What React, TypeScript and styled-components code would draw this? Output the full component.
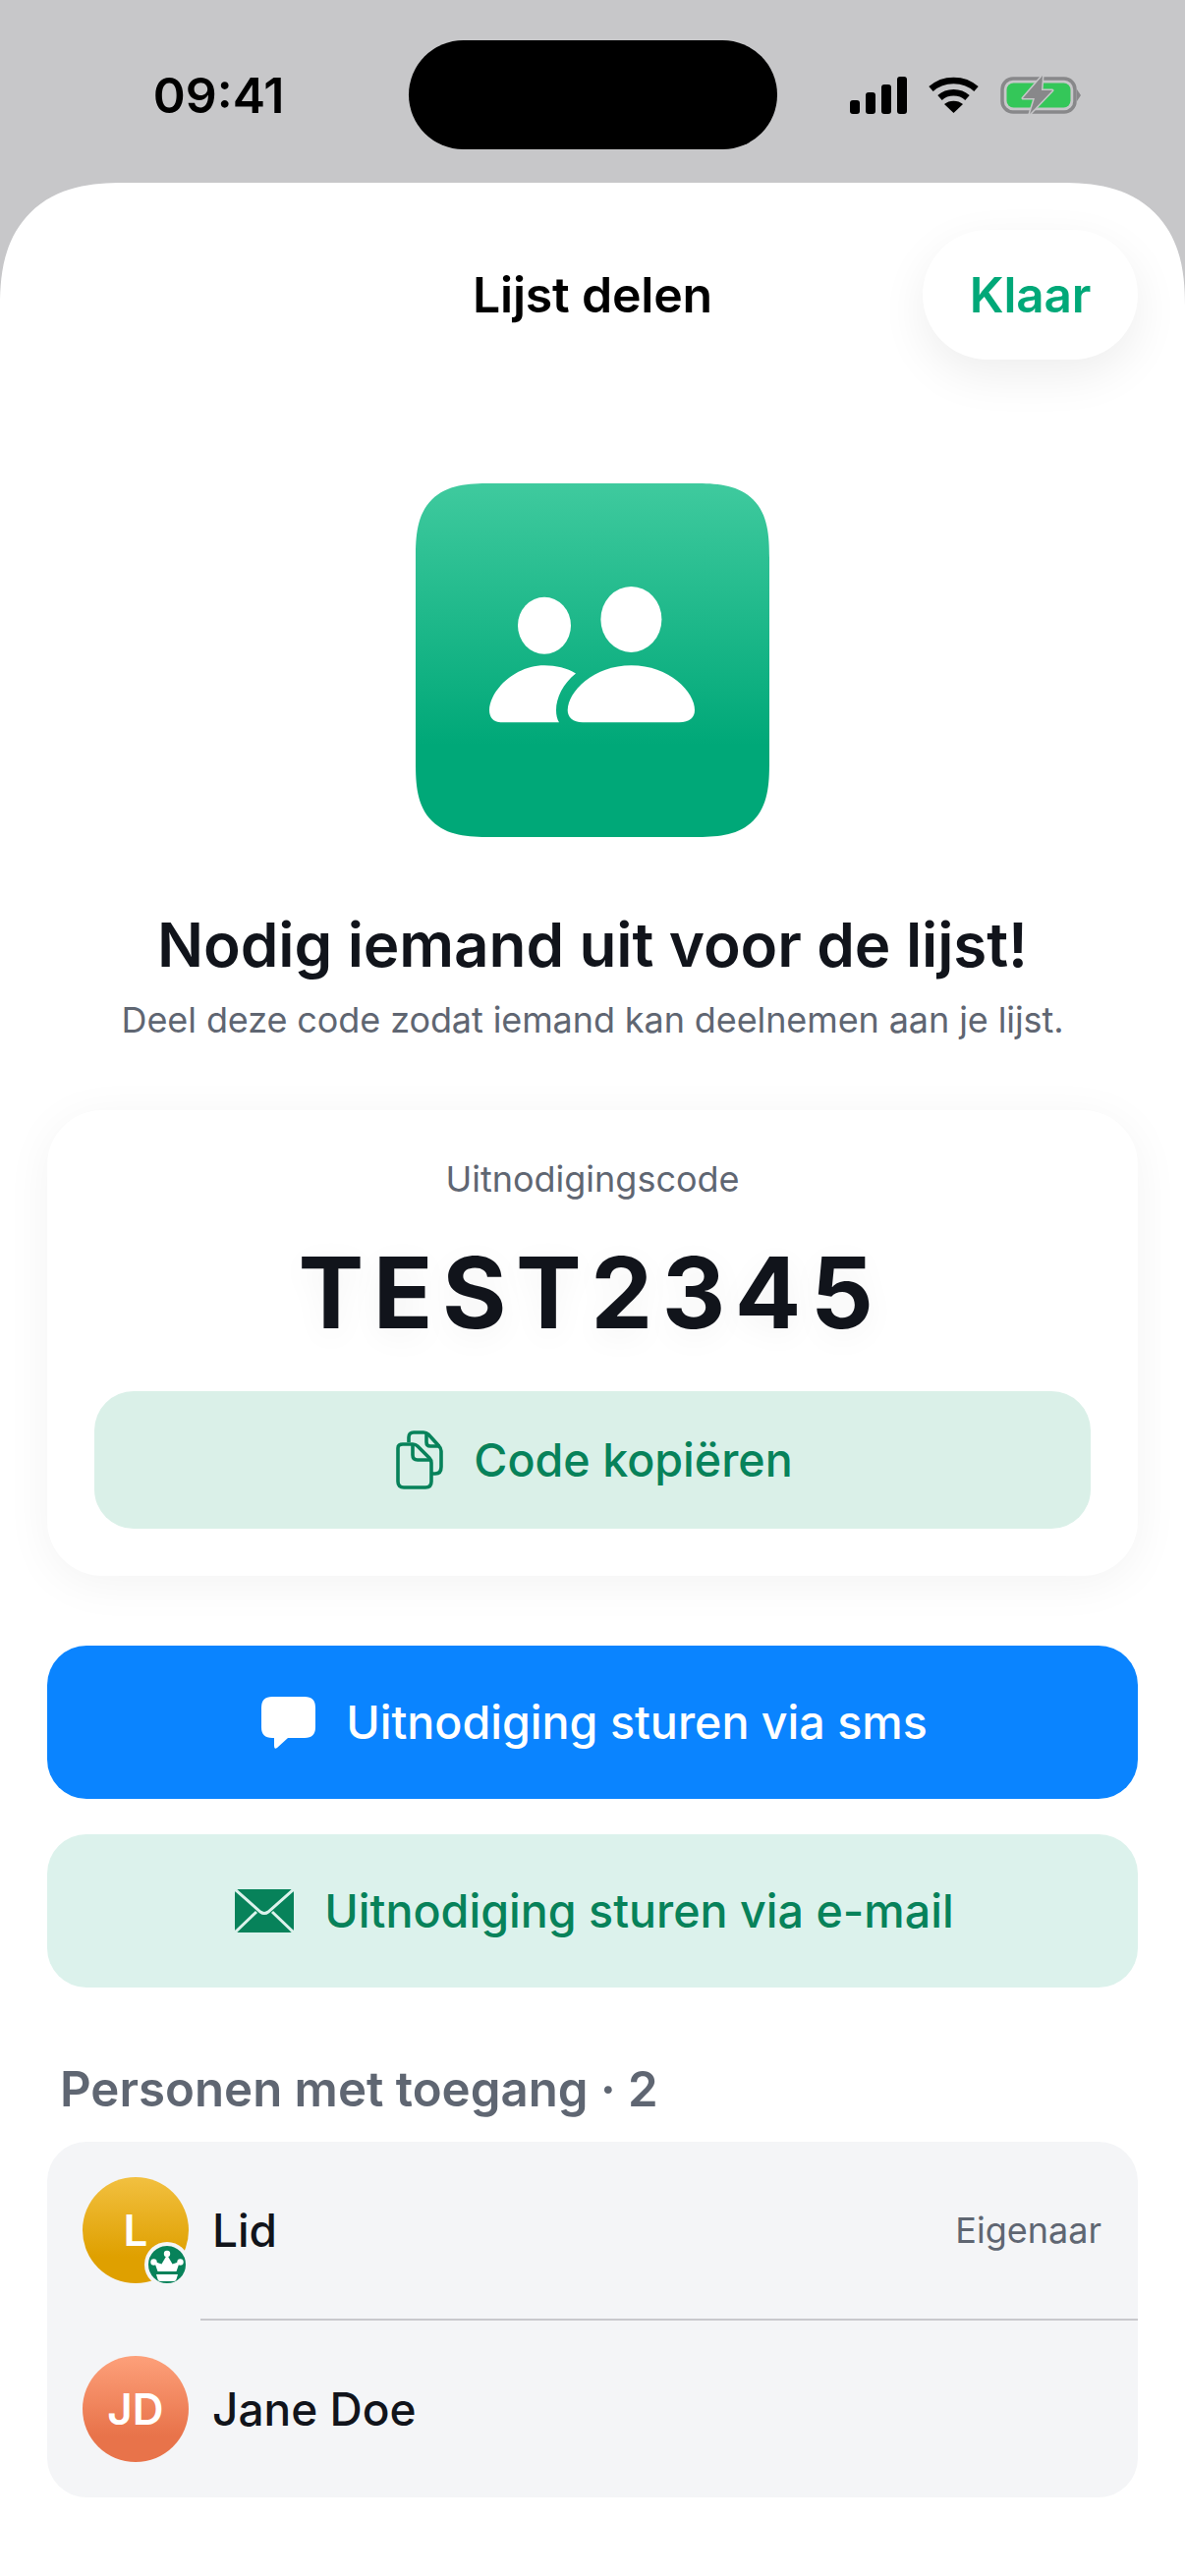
import React from "react";
import styled, { createGlobalStyle } from "styled-components";

const GlobalStyle = createGlobalStyle`
  html, body {
    margin: 0;
    padding: 0;
    background: #fff;
  }
  * {
    box-sizing: border-box;
  }
`;

const Screen = styled.div`
  display: flex;
  flex-direction: column;
  width: 1206px;
  height: 2622px;
  overflow: hidden;
  background: #c7c7c9;
  font-family: Inter, "Liberation Sans", sans-serif;
`;

const StatusBar = styled.div`
  display: grid;
  grid-template-columns: 1fr 375px 1fr;
  height: 186px;
  padding-top: 41px;
`;

const Time = styled.div`
  height: 111px;
  padding-right: 126px;
  display: flex;
  align-items: center;
  justify-content: flex-end;
  font-size: 50px;
  font-weight: 600;
  color: #000;
`;

const Island = styled.div`
  height: 111px;
  border-radius: 56px;
  background: #000;
`;

const StatusIcons = styled.div`
  height: 111px;
  padding-left: 74px;
  display: flex;
  align-items: center;
  gap: 22px;
`;

const Sheet = styled.div`
  flex: 1;
  display: flex;
  flex-direction: column;
  padding: 48px 48px 0;
  background: #fff;
  border-radius: 125px 125px 0 0;
  corner-shape: superellipse(1.3);
`;

const Header = styled.div`
  display: grid;
  grid-template-columns: 1fr auto 1fr;
  align-items: center;
  height: 132px;
`;

const Title = styled.div`
  grid-column: 2;
  font-size: 50px;
  font-weight: 600;
  letter-spacing: -0.2px;
  color: #000;
`;

const DoneButton = styled.button`
  grid-column: 3;
  justify-self: end;
  width: 219px;
  height: 132px;
  border: 0;
  border-radius: 66px;
  background: #fff;
  box-shadow: 0 16px 48px rgba(0, 0, 0, 0.07);
  font-family: inherit;
  font-size: 49.5px;
  font-weight: 600;
  letter-spacing: -0.2px;
  color: #00a878;
`;

const Hero = styled.div`
  align-self: center;
  width: 360px;
  height: 360px;
  margin-top: 126px;
  border-radius: 76px;
  corner-shape: superellipse(1.5);
  background: linear-gradient(180deg, #3fca9e 0%, #00a878 74%);
`;

const Heading = styled.h1`
  margin: 72px 0 0;
  text-align: center;
  font-size: 62px;
  line-height: 76px;
  font-weight: 600;
  letter-spacing: -0.1px;
  color: #11141b;
`;

const Subtitle = styled.p`
  margin: 16px 0 0;
  text-align: center;
  font-size: 36px;
  line-height: 44px;
  letter-spacing: -0.1px;
  color: #5f6672;
`;

const CodeCard = styled.div`
  display: flex;
  flex-direction: column;
  height: 474px;
  margin-top: 70px;
  padding: 48px 48px 0;
  border-radius: 56px;
  background: #fff;
  box-shadow: 0 8px 48px rgba(0, 0, 0, 0.05);
`;

const CodeLabel = styled.div`
  text-align: center;
  font-size: 36px;
  line-height: 44px;
  color: #5f6672;
`;

const CodeValue = styled.div`
  margin-top: 34px;
  padding-right: 4px;
  text-align: center;
  font-size: 100px;
  line-height: 120px;
  font-weight: 700;
  letter-spacing: 9.5px;
  color: #11141b;
  text-shadow: 0 8px 32px rgba(0, 0, 0, 0.05);
`;

const ActionButton = styled.button<{ $tone: "blue" | "mint" | "soft" }>`
  display: flex;
  align-items: center;
  justify-content: center;
  gap: 31px;
  width: 100%;
  height: ${(p) => (p.$tone === "soft" ? "140px" : "156px")};
  margin-top: ${(p) =>
    p.$tone === "blue" ? "71px" : p.$tone === "mint" ? "36px" : "40px"};
  padding: 0 0 0 4px;
  flex-shrink: 0;
  border: 0;
  border-radius: 40px;
  background: ${(p) =>
    p.$tone === "blue" ? "#0a84ff" : p.$tone === "mint" ? "#dcf2ec" : "#daf0e8"};
  font-family: inherit;
  font-size: 46.6px;
  font-weight: 500;
  color: ${(p) => (p.$tone === "blue" ? "#fff" : "#07825a")};
`;

const SectionTitle = styled.div`
  margin-top: 72px;
  padding-left: 13px;
  font-size: 49.2px;
  line-height: 62px;
  font-weight: 600;
  color: #5f6672;
`;

const MemberList = styled.div`
  margin-top: 23px;
  border-radius: 40px;
  background: #f4f5f7;
`;

const MemberRow = styled.div`
  display: flex;
  align-items: center;
  gap: 24px;
  height: 180px;
  padding: 0 37px 0 36px;
`;

const RowDivider = styled.div`
  height: 2px;
  margin-left: 156px;
  background: #c8c8cc;
`;

const Avatar = styled.div<{ $from: string; $to: string }>`
  position: relative;
  display: flex;
  align-items: center;
  justify-content: center;
  width: 108px;
  height: 108px;
  border-radius: 50%;
  background: linear-gradient(180deg, ${(p) => p.$from}, ${(p) => p.$to} 75%);
  font-size: 44px;
  font-weight: 600;
  color: #fff;
`;

const Badge = styled.div`
  position: absolute;
  right: -1px;
  bottom: -4px;
  display: flex;
  align-items: center;
  justify-content: center;
  width: 46px;
  height: 46px;
  border: 4px solid #f4f5f7;
  border-radius: 50%;
  background: #07825a;
`;

const MemberName = styled.div`
  flex: 1;
  font-size: 46px;
  font-weight: 500;
  color: #11141b;
`;

const MemberRole = styled.div`
  font-size: 36px;
  color: #5f6672;
`;

const SignalIcon = () => (
  <svg width="58" height="38" viewBox="0 0 58 38" fill="#000">
    <rect x="0" y="24" width="10" height="14" rx="3" />
    <rect x="16" y="16" width="10" height="22" rx="3" />
    <rect x="32" y="8" width="10" height="30" rx="3" />
    <rect x="48" y="0" width="10" height="38" rx="3" />
  </svg>
);

const WifiIcon = () => (
  <svg width="51" height="38" viewBox="0 0 51 38" fill="none">
    <path d="M2.5 12.5C15 1 36 1 48.5 12.5" stroke="#000" strokeWidth="6.5" />
    <path d="M11.5 21.5C19 14.5 32 14.5 39.5 21.5" stroke="#000" strokeWidth="6.5" />
    <path d="M25.5 37L16 28C21 23.5 30 23.5 35 28Z" fill="#000" />
  </svg>
);

const BatteryIcon = () => (
  <svg width="82" height="40" viewBox="0 0 82 40" fill="none">
    <rect x="2" y="3" width="74" height="34" rx="11" stroke="#88888a" strokeWidth="3.5" />
    <rect x="6.5" y="7.5" width="65" height="25" rx="7" fill="#34c759" />
    <path d="M78 14L82 20L78 26Z" fill="#88888a" />
    <path
      d="M43 0L23 23H35L30 39L53 15H42Z"
      fill="#88888a"
      stroke="#c7c7c9"
      strokeWidth="3"
      strokeLinejoin="round"
      paintOrder="stroke"
    />
  </svg>
);

const PeopleIcon = () => (
  <svg width="360" height="360" viewBox="0 0 360 360" fill="#fff">
    <ellipse cx="131" cy="144.7" rx="27" ry="29" />
    <ellipse cx="219.4" cy="138.4" rx="31" ry="33.5" />
    <path d="M170 243.3H268C279 243.3 284 238 284 231C284 212 258 185.3 219.5 185.3C181 185.3 154.7 212 154.7 231C154.7 238 160 243.3 170 243.3Z" />
    <path d="M146 243.3H87C79 243.3 75 238 75 231C75 212 100 185.3 131 185.3C143 185.3 154 188 163 193.5C150 204 143 218 143 231C143 236 144 240 146 243.3Z" />
  </svg>
);

const CopyIcon = () => (
  <svg width="48" height="60" viewBox="0 0 48 60" fill="none" stroke="#07825a" strokeWidth="3.6" strokeLinejoin="round">
    <path d="M13 12V7Q13 2 18 2H28Q31 2 33 4L43 15Q46 18 46 21V37Q46 44 40 44H37" />
    <path d="M31 3V12Q31 16 35 16H45" />
    <path d="M2 18Q2 14 7 14H17Q20 14 22 16L34 28Q36 30 36 33V52Q36 58 30 58H8Q2 58 2 52Z" />
    <path d="M17 15V25Q17 30 22 30H35" />
  </svg>
);

const BubbleIcon = () => (
  <svg width="55" height="53" viewBox="0 0 55 53" fill="#fff">
    <path d="M11 0H44Q55 0 55 11V31Q55 42 44 42H27L16 52Q13 54 13 50V42H11Q0 42 0 31V11Q0 0 11 0Z" />
  </svg>
);

const MailIcon = () => (
  <svg width="60" height="44" viewBox="0 0 60 44">
    <rect x="0" y="0" width="60" height="44" rx="4" fill="#07825a" />
    <path
      d="M0 0L26 23Q30 26 34 23L60 0M0 44L22 23M60 44L38 23"
      fill="none"
      stroke="#dcf2ec"
      strokeWidth="3"
    />
  </svg>
);

const CrownIcon = () => (
  <svg width="38" height="38" viewBox="0 0 38 38" fill="#fff">
    <circle cx="19" cy="8" r="3.2" />
    <circle cx="5.5" cy="16.5" r="3.2" />
    <circle cx="32.5" cy="16.5" r="3.2" />
    <path d="M19 9L24.5 18.5L32 16L28.5 26H9.5L6 16L13.5 18.5Z" />
    <path d="M8 29H30L28.5 34Q28 36 26 36H12Q10 36 9.5 34Z" />
  </svg>
);

function App() {
  return (
    <Screen>
      <GlobalStyle />
      <StatusBar>
        <Time>09:41</Time>
        <Island />
        <StatusIcons>
          <SignalIcon />
          <WifiIcon />
          <BatteryIcon />
        </StatusIcons>
      </StatusBar>
      <Sheet>
        <Header>
          <Title>Lijst delen</Title>
          <DoneButton>Klaar</DoneButton>
        </Header>
        <Hero>
          <PeopleIcon />
        </Hero>
        <Heading>Nodig iemand uit voor de lijst!</Heading>
        <Subtitle>Deel deze code zodat iemand kan deelnemen aan je lijst.</Subtitle>
        <CodeCard>
          <CodeLabel>Uitnodigingscode</CodeLabel>
          <CodeValue>TEST2345</CodeValue>
          <ActionButton $tone="soft">
            <CopyIcon />
            Code kopiëren
          </ActionButton>
        </CodeCard>
        <ActionButton $tone="blue">
          <BubbleIcon />
          Uitnodiging sturen via sms
        </ActionButton>
        <ActionButton $tone="mint">
          <MailIcon />
          Uitnodiging sturen via e-mail
        </ActionButton>
        <SectionTitle>Personen met toegang · 2</SectionTitle>
        <MemberList>
          <MemberRow>
            <Avatar $from="#f2c040" $to="#dfa000">
              L
              <Badge>
                <CrownIcon />
              </Badge>
            </Avatar>
            <MemberName>Lid</MemberName>
            <MemberRole>Eigenaar</MemberRole>
          </MemberRow>
          <RowDivider />
          <MemberRow>
            <Avatar $from="#fda07a" $to="#e8734a">
              JD
            </Avatar>
            <MemberName>Jane Doe</MemberName>
          </MemberRow>
        </MemberList>
      </Sheet>
    </Screen>
  );
}

export default App;
